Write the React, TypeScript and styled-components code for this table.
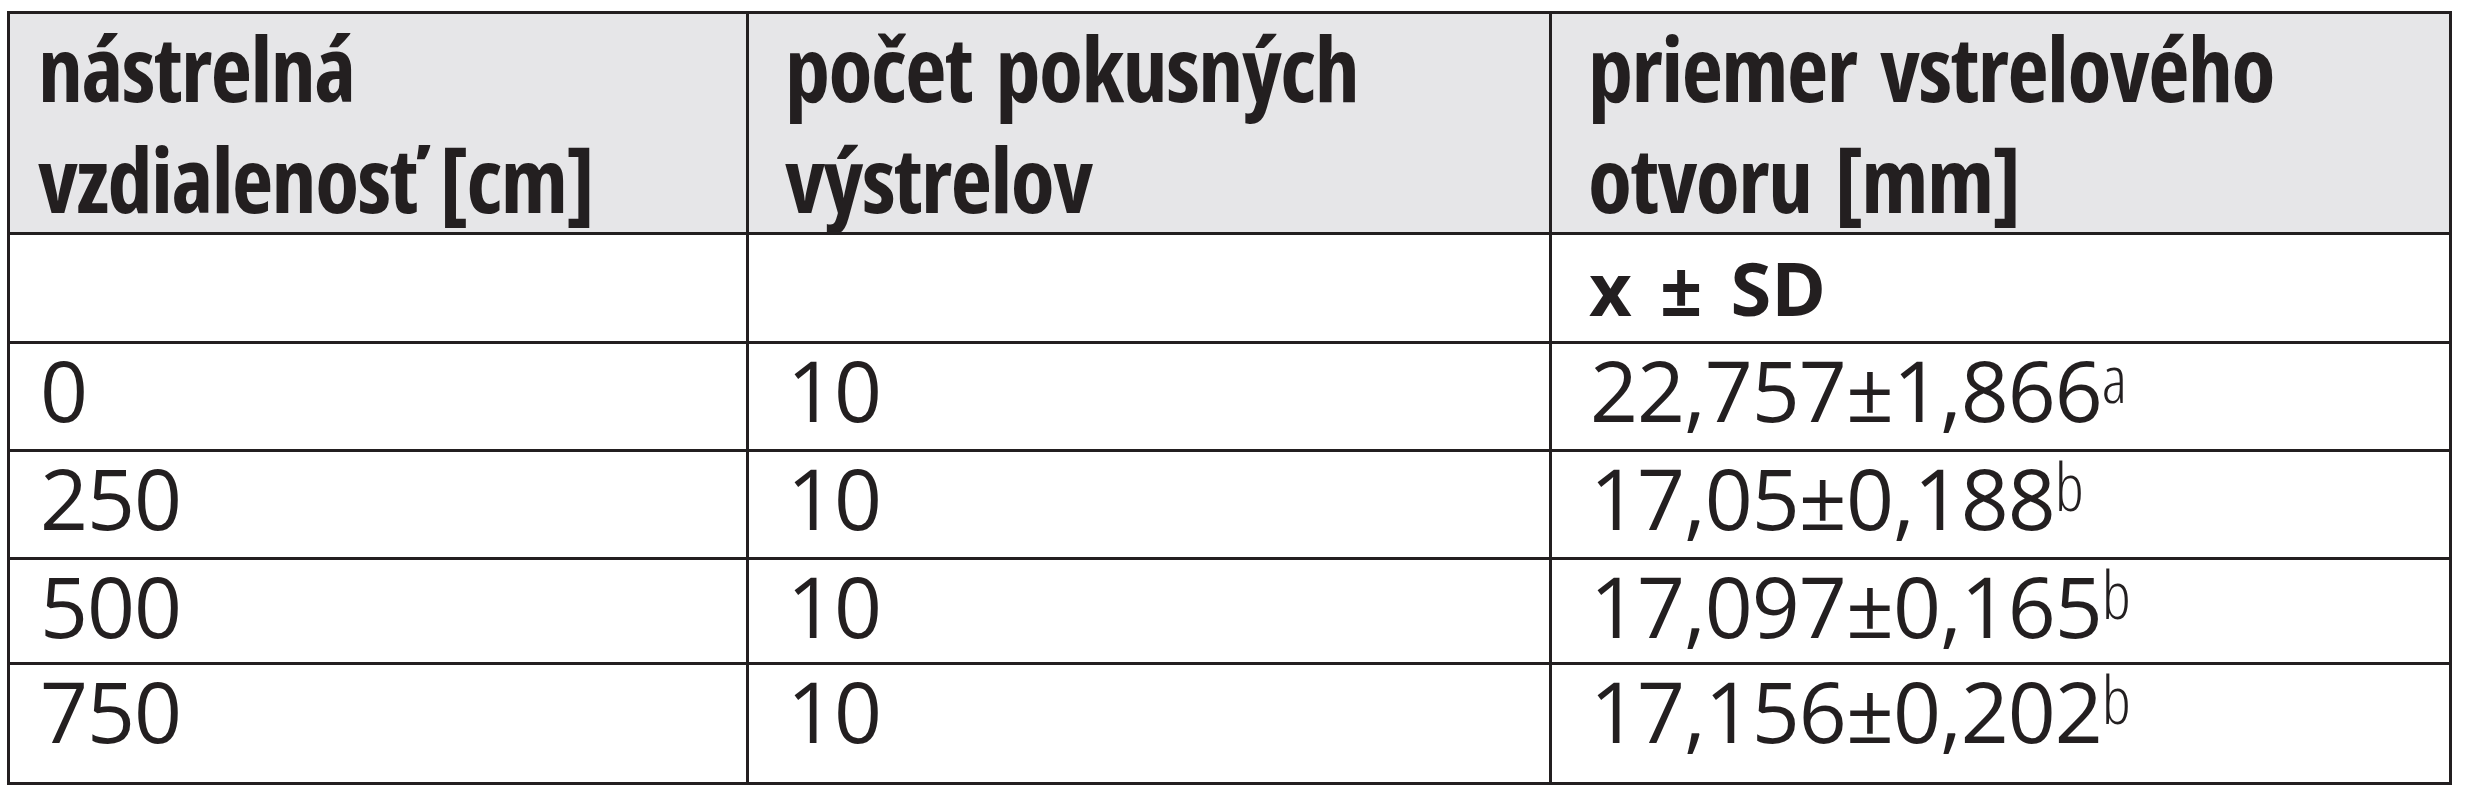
import React from "react";
import styled, { createGlobalStyle } from "styled-components";

const GlobalStyle = createGlobalStyle`
  html, body { margin: 0; padding: 0; background: #ffffff; }
`;

const Page = styled.div`
  padding: 11px 0 0 7px;
`;

const Table = styled.div`
  display: grid;
  grid-template-columns: 736px 800px 897px;
  grid-template-rows: 218px 106px 105px 105px 102px 117px;
  gap: 3px;
  padding: 3px;
  width: max-content;
  background: #231f20;
  color: #231f20;
  font-family: "Open Sans", "Liberation Sans", sans-serif;
`;

const Cell = styled.div<{ $first?: boolean }>`
  background: #ffffff;
  padding-left: ${(p) => (p.$first ? "30px" : "38px")};
  font-size: 84px;
  font-weight: 400;
  font-stretch: 90%;
  letter-spacing: -1px;
  line-height: 92px;
  white-space: nowrap;
`;

const HeadCell = styled.div<{ $first?: boolean }>`
  background: #e6e6e8;
  padding-left: ${(p) => (p.$first ? "28px" : "36px")};
  font-size: 90px;
  font-weight: 700;
  font-stretch: 75%;
  letter-spacing: -1.5px;
  word-spacing: 9px;
  line-height: 111px;
  white-space: nowrap;
`;

const HeadText = styled.div`
  margin-top: -2px;
`;

const StatCell = styled.div`
  background: #ffffff;
  padding-left: 37px;
  font-size: 74px;
  font-weight: 700;
  font-stretch: 100%;
  word-spacing: 9px;
  line-height: 106px;
  white-space: nowrap;
`;

const Sup = styled.span`
  font-size: 66px;
  font-weight: 300;
  font-stretch: 85%;
  letter-spacing: 0;
  vertical-align: 19px;
  line-height: 0;
`;

const rows: { dist: string; count: string; mean: string; sup: string }[] = [
  { dist: "0", count: "10", mean: "22,757±1,866", sup: "a" },
  { dist: "250", count: "10", mean: "17,05±0,188", sup: "b" },
  { dist: "500", count: "10", mean: "17,097±0,165", sup: "b" },
  { dist: "750", count: "10", mean: "17,156±0,202", sup: "b" },
];

export default function App() {
  return (
    <>
      <GlobalStyle />
      <Page>
        <Table>
          <HeadCell $first>
            <HeadText>
              nástrelná
              <br />
              vzdialenosť [cm]
            </HeadText>
          </HeadCell>
          <HeadCell>
            <HeadText>
              počet pokusných
              <br />
              výstrelov
            </HeadText>
          </HeadCell>
          <HeadCell>
            <HeadText>
              priemer vstrelového
              <br />
              otvoru [mm]
            </HeadText>
          </HeadCell>
          <Cell $first />
          <Cell />
          <StatCell>x ± SD</StatCell>
          {rows.map((r) => (
            <React.Fragment key={r.dist}>
              <Cell $first>{r.dist}</Cell>
              <Cell>{r.count}</Cell>
              <Cell>
                {r.mean}
                <Sup>{r.sup}</Sup>
              </Cell>
            </React.Fragment>
          ))}
        </Table>
      </Page>
    </>
  );
}
